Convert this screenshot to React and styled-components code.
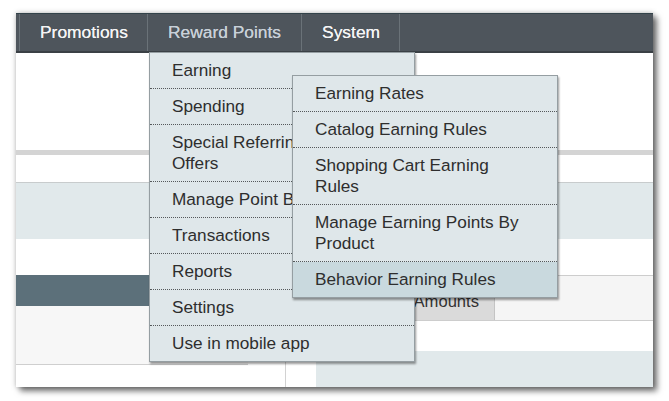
import React from 'react'
import styled, { createGlobalStyle } from 'styled-components';

const GlobalStyle = createGlobalStyle`
    html, body {
        margin: 0;
        padding: 0;
        background: #ffffff;
        font-family: "Liberation Sans", Arial, sans-serif;
    }
`;

const rewardItems = [
    { label: 'Earning', sub: true },
    { label: 'Spending' },
    { label: ['Special Referring', 'Offers'] },
    { label: 'Manage Point Balances' },
    { label: 'Transactions' },
    { label: 'Reports' },
    { label: 'Settings' },
    { label: 'Use in mobile app' },
];

const earningItems = [
    { label: 'Earning Rates' },
    { label: 'Catalog Earning Rules' },
    { label: ['Shopping Cart Earning', 'Rules'] },
    { label: ['Manage Earning Points By', 'Product'] },
    { label: 'Behavior Earning Rules', active: true },
];

function Label({ text }) {
    if (Array.isArray(text)) {
        return <>{text[0]}<br />{text[1]}</>
    }
    return text
}

function EarningMenu() {
    return (
        <SubMenuStyled>
            {earningItems.map((item, i) => (
                <MenuItem key={i} $active={item.active}>
                    <Label text={item.label} />
                </MenuItem>
            ))}
        </SubMenuStyled>
    )
}

function RewardMenu() {
    return (
        <MenuStyled>
            {rewardItems.map((item, i) => (
                <MenuItem key={i}>
                    <Label text={item.label} />
                    {item.sub && <EarningMenu />}
                </MenuItem>
            ))}
        </MenuStyled>
    )
}

function App() {
    return (
        <PageStyled>
            <GlobalStyle />
            <FrameStyled>
                <NavBar>
                    <NavEdge />
                    <NavItem>Promotions</NavItem>
                    <NavItem $open>
                        Reward Points
                        <RewardMenu />
                    </NavItem>
                    <NavItem>System</NavItem>
                    <NavItem $rest />
                </NavBar>
                <ContentStyled>
                    <Band $h={97} />
                    <Band $h={5} $bg="#d4d4d4" />
                    <Band $h={27} />
                    <Band $h={56} $bg="#e1e9eb" $top="#c8cccd" />
                    <Band $h={36} />
                    <BottomSection>
                        <LeftColumn>
                            <TabTitle />
                            <TabBody />
                        </LeftColumn>
                        <RightColumn>
                            <TabBar>
                                <Tab>Amounts</Tab>
                            </TabBar>
                            <Band $h={30} />
                            <InfoBlock />
                        </RightColumn>
                    </BottomSection>
                </ContentStyled>
            </FrameStyled>
        </PageStyled>
    )
}

const PageStyled = styled.div`
    width: 669px;
    height: 401px;
    padding: 13px 0 0 16px;
    box-sizing: border-box;
    overflow: hidden;
`;

const FrameStyled = styled.div`
    width: 637px;
    height: 374px;
    display: flex;
    flex-direction: column;
    background: #ffffff;
    box-shadow: 4px 4px 6px rgba(0, 0, 0, .55), 0 0 5px rgba(0, 0, 0, .25);
`;

const NavBar = styled.div`
    height: 40px;
    flex-shrink: 0;
    display: flex;
    background: #4e555c;
    border-top: 1px solid #33434a;
    border-bottom: 2px solid #3a4045;
    box-sizing: border-box;
    position: relative;
    z-index: 2;
`;

const NavEdge = styled.div`
    width: 3px;
`;

const NavItem = styled.div`
    position: relative;
    display: flex;
    align-items: center;
    padding: 0 19px 0 20px;
    border-left: 1px solid #6a7278;
    font-size: 17.4px;
    color: ${p => p.$open ? '#c8d0d8' : '#f4f4f4'};
    text-shadow: 0 0 .4px currentColor;
    white-space: nowrap;
    flex: ${p => p.$rest ? 1 : 'none'};
    ${p => p.$open && 'padding-right: 20px;'}
`;

const MenuStyled = styled.div`
    position: absolute;
    left: 1px;
    top: 38px;
    width: 266px;
    box-sizing: border-box;
    background: #dfe7ea;
    border: 1px solid #959ea2;
    box-shadow: 1px 2px 2px rgba(0, 0, 0, .4);
    text-shadow: none;
`;

const SubMenuStyled = styled(MenuStyled)`
    left: 142px;
    top: 22px;
    z-index: 3;
`;

const MenuItem = styled.div`
    position: relative;
    padding: 7px 20px 7px 22px;
    line-height: 21px;
    font-size: 17.2px;
    color: #2e2e2e;
    background: ${p => p.$active ? '#c9d9de' : 'transparent'};
    border-bottom: 1px dotted #55595b;
    &:last-child{
        border-bottom: none;
        padding-bottom: 7px;
    }
`;

const ContentStyled = styled.div`
    flex: 1;
    display: flex;
    flex-direction: column;
    overflow: hidden;
`;

const Band = styled.div`
    height: ${p => p.$h}px;
    flex-shrink: 0;
    background: ${p => p.$bg || '#ffffff'};
    ${p => p.$top && `border-top: 1px solid ${p.$top};`}
`;

const BottomSection = styled.div`
    flex: 1;
    display: flex;
    gap: 37px;
`;

const LeftColumn = styled.div`
    width: 232px;
    display: flex;
    flex-direction: column;
`;

const TabTitle = styled.div`
    height: 31px;
    background: #5c707a;
`;

const TabBody = styled.div`
    height: 58px;
    background: #f7f7f7;
    border-bottom: 1px solid #cfcfcf;
`;

const RightColumn = styled.div`
    flex: 1;
    display: flex;
    flex-direction: column;
    border-left: 1px solid #d2d2d2;
`;

const TabBar = styled.div`
    height: 46px;
    box-sizing: border-box;
    display: flex;
    background: #f5f5f5;
    border-top: 1px solid #cdcdcd;
    border-bottom: 1px solid #cdcdcd;
`;

const Tab = styled.div`
    width: 209px;
    box-sizing: border-box;
    display: flex;
    align-items: flex-end;
    justify-content: flex-end;
    padding: 0 15px 8px 0;
    background: #dadada;
    border-right: 1px solid #c4c4c4;
    font-size: 16.6px;
    color: #333333;
`;

const InfoBlock = styled.div`
    flex: 1;
    margin-left: 30px;
    background: #e1e9eb;
`;

export default App;
